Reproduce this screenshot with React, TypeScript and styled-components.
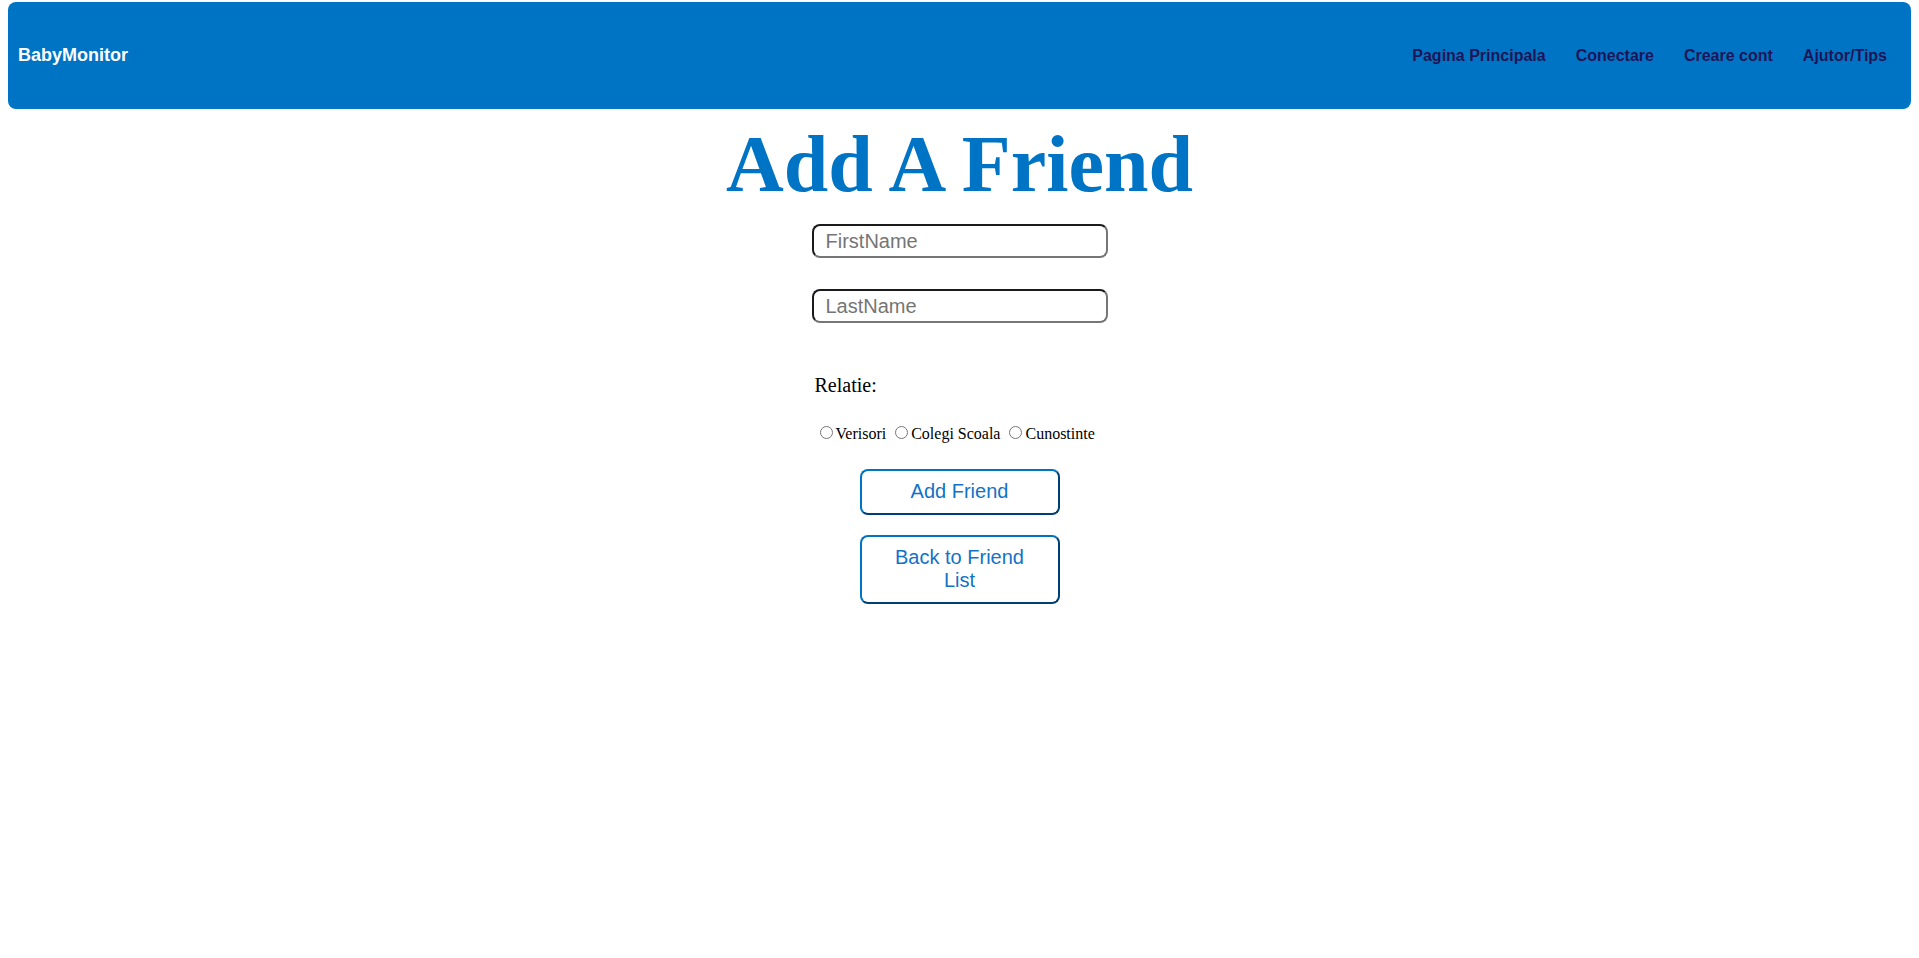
import React from "react";
import styled, { createGlobalStyle } from "styled-components";

const GlobalStyle = createGlobalStyle`
  html, body { margin: 0; padding: 0; background: #ffffff; }
  body { font-family: "Liberation Serif", "Times New Roman", serif; }
`;

const Page = styled.div`
  padding: 2px 8px 0 8px;
  display: flex;
  flex-direction: column;
  align-items: center;
`;

const NavBar = styled.nav`
  align-self: stretch;
  height: 107px;
  background: #0074c4;
  border-radius: 8px;
  display: flex;
  align-items: center;
  justify-content: space-between;
  padding: 0 24px 0 10px;
  box-sizing: border-box;
  font-family: "Liberation Sans", Arial, sans-serif;
  font-weight: bold;
`;

const Brand = styled.a`
  color: #ffffff;
  font-size: 18px;
  text-decoration: none;
`;

const NavLinks = styled.div`
  display: flex;
  gap: 30px;
  margin-top: 1px;
`;

const NavLink = styled.a`
  color: #1e1458;
  font-size: 16px;
  text-decoration: none;
`;

const Title = styled.h1`
  margin: 9px 0 0 0;
  font-family: "Liberation Serif", "Times New Roman", serif;
  font-size: 80px;
  line-height: 92px;
  font-weight: bold;
  color: #0074c4;
`;

const Form = styled.form`
  width: 296px;
  display: flex;
  flex-direction: column;
  align-items: stretch;
`;

const TextInput = styled.input<{ $gap: number }>`
  margin-top: ${(p) => p.$gap}px;
  height: 34px;
  box-sizing: border-box;
  border-width: 2px;
  border-style: solid;
  border-color: #1b1b1b #767676 #767676 #1b1b1b;
  border-radius: 8px;
  padding: 0 12px;
  font-family: "Liberation Sans", Arial, sans-serif;
  font-size: 20px;
  color: #222;
  outline: none;
  &::placeholder { color: #757575; }
`;

const RelationBlock = styled.div`
  margin-top: 51px;
  padding-left: 3px;
  text-align: left;
`;

const RelationLabel = styled.div`
  font-size: 20px;
  line-height: 23px;
  color: #000;
`;

const RadioRow = styled.div`
  margin-top: 26px;
  font-size: 16px;
  color: #000;
  white-space: nowrap;
`;

const Radio = styled.input`
  width: 13px;
  height: 13px;
  margin: 3px 3px 0 5px;
`;

const ButtonStack = styled.div`
  margin-top: 26px;
  display: flex;
  flex-direction: column;
  align-items: center;
  gap: 20px;
`;

const ActionButton = styled.button`
  width: 200px;
  box-sizing: border-box;
  padding: 9px 20px 10px;
  background: #ffffff;
  border-width: 2px;
  border-style: solid;
  border-color: #0074c4 #003f73 #003f73 #0074c4;
  border-radius: 8px;
  font-family: "Liberation Sans", Arial, sans-serif;
  font-size: 20px;
  line-height: 23px;
  color: #1272c6;
  cursor: pointer;
`;

export default function App() {
  return (
    <>
      <GlobalStyle />
      <Page>
        <NavBar>
          <Brand href="#">BabyMonitor</Brand>
          <NavLinks>
            <NavLink href="#">Pagina Principala</NavLink>
            <NavLink href="#">Conectare</NavLink>
            <NavLink href="#">Creare cont</NavLink>
            <NavLink href="#">Ajutor/Tips</NavLink>
          </NavLinks>
        </NavBar>
        <Title>Add A Friend</Title>
        <Form onSubmit={(e) => e.preventDefault()}>
          <TextInput $gap={14} type="text" placeholder="FirstName" />
          <TextInput $gap={31} type="text" placeholder="LastName" />
          <RelationBlock>
            <RelationLabel>Relatie:</RelationLabel>
            <RadioRow>
              <Radio type="radio" name="rel" id="r1" />
              <label htmlFor="r1">Verisori</label>{" "}
              <Radio type="radio" name="rel" id="r2" />
              <label htmlFor="r2">Colegi Scoala</label>{" "}
              <Radio type="radio" name="rel" id="r3" />
              <label htmlFor="r3">Cunostinte</label>
            </RadioRow>
          </RelationBlock>
          <ButtonStack>
            <ActionButton type="submit">Add Friend</ActionButton>
            <ActionButton type="button">Back to Friend List</ActionButton>
          </ButtonStack>
        </Form>
      </Page>
    </>
  );
}
